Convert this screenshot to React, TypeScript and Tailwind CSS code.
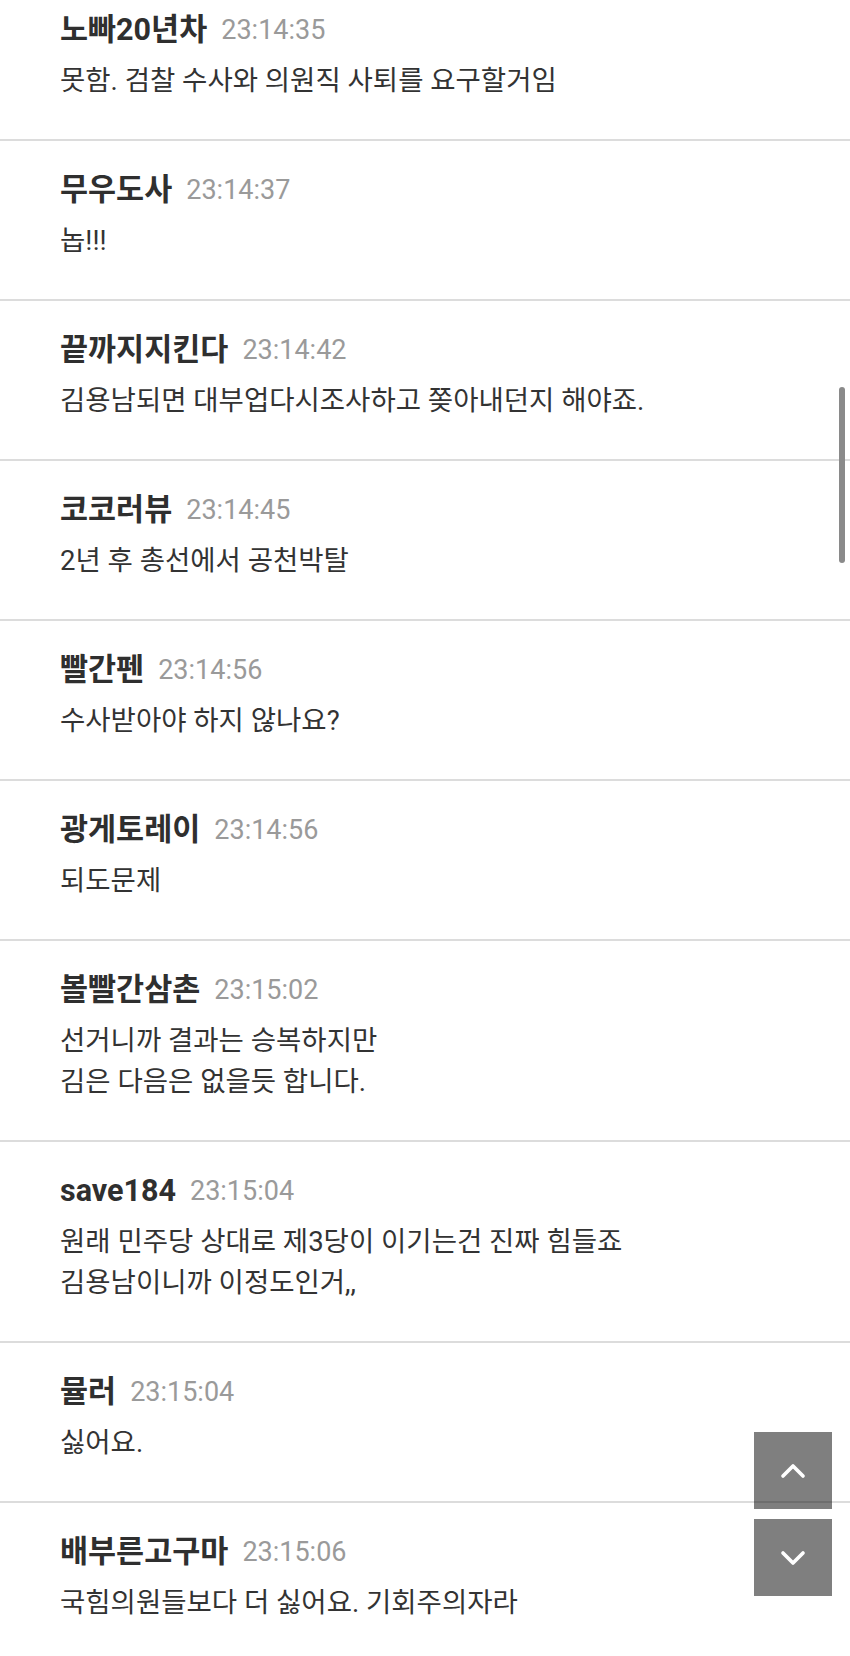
import { ChevronUp, ChevronDown } from 'lucide-react';

type Comment = {
  name: string;
  time: string;
  lines: string[];
};

const comments: Comment[] = [
  { name: '노빠20년차', time: '23:14:35', lines: ['못함. 검찰 수사와 의원직 사퇴를 요구할거임'] },
  { name: '무우도사', time: '23:14:37', lines: ['놉!!!'] },
  { name: '끝까지지킨다', time: '23:14:42', lines: ['김용남되면 대부업다시조사하고 쫒아내던지 해야죠.'] },
  { name: '코코러뷰', time: '23:14:45', lines: ['2년 후 총선에서 공천박탈'] },
  { name: '빨간펜', time: '23:14:56', lines: ['수사받아야 하지 않나요?'] },
  { name: '광게토레이', time: '23:14:56', lines: ['되도문제'] },
  { name: '볼빨간삼촌', time: '23:15:02', lines: ['선거니까 결과는 승복하지만', '김은 다음은 없을듯 합니다.'] },
  { name: 'save184', time: '23:15:04', lines: ['원래 민주당 상대로 제3당이 이기는건 진짜 힘들죠', '김용남이니까 이정도인거,,'] },
  { name: '뮬러', time: '23:15:04', lines: ['싫어요.'] },
  { name: '배부른고구마', time: '23:15:06', lines: ['국힘의원들보다 더 싫어요. 기회주의자라'] },
];

function CommentRow({ c, first }: { c: Comment; first: boolean }) {
  return (
    <div className={`border-b-2 border-[#dcdcdc] pl-[60px] pr-6 pb-[38px] ${first ? 'pt-[8px]' : 'pt-[27px]'}`}>
      <div className="flex items-center gap-[14px] h-[44px]">
        <span className="text-[30.5px] font-bold text-[#2f2f2f]">{c.name}</span>
        <span className="text-[27px] text-[#9a9a9a]">{c.time}</span>
      </div>
      <div className="mt-[8px] text-[27.5px] leading-[41px] text-[#333]">
        {c.lines.map((l, i) => (
          <div key={i}>{l}</div>
        ))}
      </div>
    </div>
  );
}

export default function App() {
  return (
    <div
      className="relative w-[850px] h-[1656px] overflow-hidden bg-white"
      style={{ fontFamily: 'Roboto, "Noto Sans CJK KR", sans-serif' }}
    >
      {comments.map((c, i) => (
        <CommentRow key={i} c={c} first={i === 0} />
      ))}

      {/* scrollbar thumb */}
      <div className="absolute right-[5px] top-[387px] h-[176px] w-[6px] rounded-full bg-[#8a8a8a]" />

      {/* scroll buttons */}
      <div className="absolute left-[754px] top-[1432px] flex flex-col gap-[10px]">
        <button className="flex h-[77px] w-[78px] items-center justify-center bg-black/50 text-white">
          <ChevronUp className="h-[40px] w-[40px]" strokeWidth={2.2} />
        </button>
        <button className="flex h-[77px] w-[78px] items-center justify-center bg-black/50 text-white">
          <ChevronDown className="h-[40px] w-[40px]" strokeWidth={2.2} />
        </button>
      </div>
    </div>
  );
}
